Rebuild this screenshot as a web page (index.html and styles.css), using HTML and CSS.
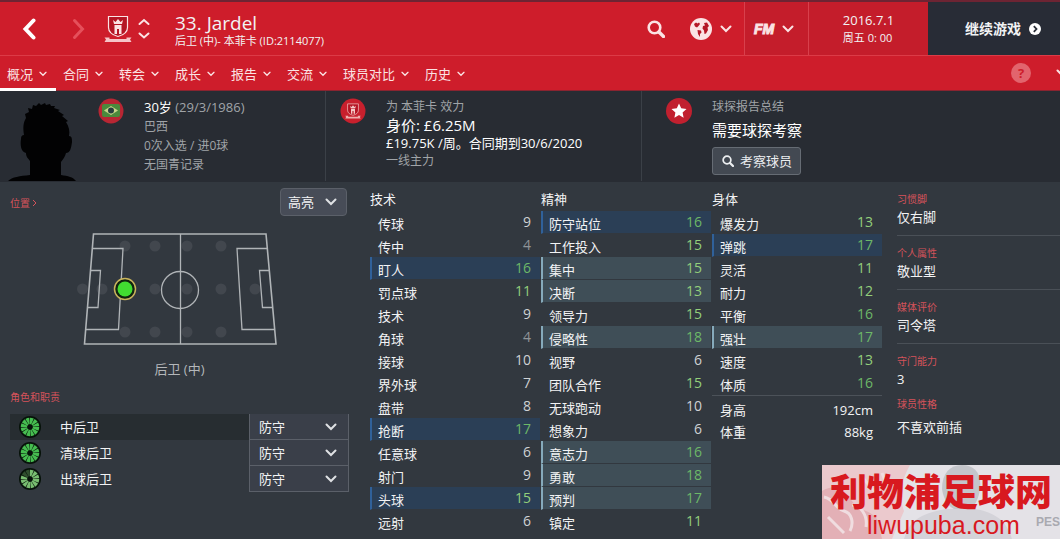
FILE: index.html
```html
<!DOCTYPE html>
<html lang="zh-CN">
<head>
    <meta charset="UTF-8">
    <meta name="viewport" content="width=device-width, initial-scale=1.0">
    <title>33. Jardel</title>
    <link rel="stylesheet" href="styles.css">
</head>
<body>
    <!-- shared icons -->
    <svg class="sprite" aria-hidden="true">
        <symbol id="chevron" viewBox="0 0 12 8"><path d="M1.500 1.500 6 6l4.500-4.500" fill="none" stroke="currentColor" stroke-width="2" stroke-linecap="round"/></symbol>
        <symbol id="search" viewBox="0 0 18 18"><circle cx="7.500" cy="7.500" r="5.800" fill="none" stroke="currentColor" stroke-width="2.600"/><path d="M12 12l4.500 4.500" stroke="currentColor" stroke-width="3.400" stroke-linecap="round"/></symbol>
        <symbol id="crest" viewBox="0 0 28 28">
            <path d="M4.500 1.500h19v11c0 5-4 7.500-9.500 9-5.500-1.500-9.500-4-9.500-9z" fill="#b51524" stroke="currentColor" stroke-width="1.200"/>
            <path d="M9 5l2.500 2L14 4l2.500 3L19 5l-1 4h-8z" fill="currentColor"/>
            <path d="M10.500 10h7v9h-2.500v-5h-2v5h-2.500z" fill="currentColor"/>
            <path d="M.5 22.500h5v1.500h17v-1.500h5l-1.500 2 1.500 2.500H.5L2 24.500z" fill="currentColor" opacity=".85"/>
        </symbol>
        <symbol id="wheel" viewBox="0 0 22 22">
            <circle cx="11" cy="11" r="11" fill="#07120a"/>
            <circle cx="11" cy="11" r="6" fill="none" stroke="currentColor" stroke-width="6.500" pathLength="12" stroke-dasharray=".84 .16"/>
            <circle cx="11" cy="11" r="2.500" fill="#07120a"/>
        </symbol>
    </svg>

    <header class="topbar">
        <button class="icon-btn back" aria-label="后退">
            <svg width="14" height="22" viewBox="0 0 14 22"><path d="M11.500 2.500 3.500 11l8 8.500" fill="none" stroke="currentColor" stroke-width="4" stroke-linecap="round"/></svg>
        </button>
        <button class="icon-btn forward" aria-label="前进">
            <svg width="14" height="22" viewBox="0 0 14 22"><path d="M2.500 2.500l8 8.500-8 8.500" fill="none" stroke="currentColor" stroke-width="3" stroke-linecap="round"/></svg>
        </button>
        <button class="icon-btn club" aria-label="本菲卡"><svg width="28" height="28"><use href="#crest"/></svg></button>
        <button class="icon-btn switcher" aria-label="切换球员">
            <svg width="12" height="22" viewBox="0 0 12 22"><path d="M1.500 6 6 2l4.500 4M1.500 15.500l4.500 4 4.500-4" fill="none" stroke="currentColor" stroke-width="2" stroke-linecap="round"/></svg>
        </button>
        <div class="title">
            <h1>33. Jardel</h1>
            <p>后卫 (中)- 本菲卡 (ID:2114077)</p>
        </div>
        <button class="icon-btn find" aria-label="搜索"><svg width="18" height="18"><use href="#search"/></svg></button>
        <button class="icon-btn world" aria-label="世界">
            <svg width="22" height="22" viewBox="0 0 22 22">
                <circle cx="11" cy="11" r="11" fill="currentColor"/>
                <path d="M4 6l2-1.500 1.500 1L9 4.500l1 1.500-1.500 2L7 9.500 5 8.500z" fill="#b51726"/>
                <path d="M7.500 12l3.500.5.500 2-1.500 1.500v3l-2-3z" fill="#b51726"/>
                <path d="M14 5l3-.5 2 3.500-1.500 1.500L18 12l-2 3.500-1.500.5-.5-3.500-1.500-2 .5-2.500 2-.5z" fill="#b51726"/>
            </svg>
            <svg class="chev" width="12" height="8"><use href="#chevron"/></svg>
        </button>
        <button class="icon-btn fm"><b>FM</b><svg class="chev" width="12" height="8"><use href="#chevron"/></svg></button>
        <div class="date"><div><span class="day">2016.7.1</span><span class="hour">周五 0: 00</span></div></div>
        <button class="continue">继续游戏
            <svg width="12" height="12" viewBox="0 0 12 12"><circle cx="6" cy="6" r="6" fill="#fff"/><path d="M4.800 3.200 7.500 6 4.800 8.800" fill="none" stroke="#282c36" stroke-width="1.800"/></svg>
        </button>
    </header>

    <nav class="tabs">
        <a href="#" class="active">概况<svg><use href="#chevron"/></svg></a>
        <a href="#">合同<svg><use href="#chevron"/></svg></a>
        <a href="#">转会<svg><use href="#chevron"/></svg></a>
        <a href="#">成长<svg><use href="#chevron"/></svg></a>
        <a href="#">报告<svg><use href="#chevron"/></svg></a>
        <a href="#">交流<svg><use href="#chevron"/></svg></a>
        <a href="#">球员对比<svg><use href="#chevron"/></svg></a>
        <a href="#">历史<svg><use href="#chevron"/></svg></a>
        <button class="help">?</button>
        <button class="icon-btn more" aria-label="更多"><svg width="12" height="8"><use href="#chevron"/></svg></button>
    </nav>

    <section class="info">
        <div class="info-card bio">
            <svg class="portrait" width="72" height="80" viewBox="0 0 72 80"><path d="M0 80c4-4 12-5 22-6V60c-2-3-4-4-4-8-5-1-6-8-5-14 0-3 1-4 3-4-1-7-1-12 2-17l-1-4 4-2-1-4 4 1 1-4 3 1 3-3 2 2 4-2 1 2 4-1 1 2 4 0-1 2 6 2-2 1 6 4-2 1 6 5-2 1c3 5 4 9 3 14 3 0 3 3 3 6-1 7-2 11-6 11-1 4-3 6-5 9v13c7 1 12 2 15 6z" fill="#020203"/></svg>
            <svg class="badge" width="26" height="26" viewBox="0 0 26 26">
                <circle cx="13" cy="13" r="12.500" fill="#b82633"/>
                <rect x="4" y="6" width="18" height="13" rx="2" fill="#4a8a3c"/>
                <path d="M6 12.500 13 8l7 4.500-7 4.500z" fill="#c8d68a"/>
                <circle cx="13" cy="12.500" r="3" fill="#27403f"/>
            </svg>
            <div class="lines">
                <p class="strong"><b>30岁</b> (29/3/1986)</p>
                <p>巴西</p>
                <p>0次入选 / 进0球</p>
                <p>无国青记录</p>
            </div>
        </div>
        <div class="info-card contract">
            <svg class="badge" width="26" height="26" viewBox="0 0 26 26">
                <circle cx="13" cy="13" r="12.500" fill="#c8202d"/>
                <svg x="5" y="5" width="16" height="16" color="#f4c9c6"><use href="#crest"/></svg>
            </svg>
            <div class="lines">
                <p>为 本菲卡 效力</p>
                <p class="value">身价: £6.25M</p>
                <p class="wage">£19.75K /周。合同期到30/6/2020</p>
                <p>一线主力</p>
            </div>
        </div>
        <div class="info-card scout">
            <svg class="badge" width="26" height="26" viewBox="0 0 26 26">
                <circle cx="13" cy="13" r="13" fill="#c1202f"/>
                <path d="M13 5.500l2.200 4.800 5.300.6-3.900 3.600 1 5.200-4.600-2.600-4.600 2.600 1-5.200-3.900-3.600 5.300-.6z" fill="#fff"/>
            </svg>
            <div class="lines">
                <p>球探报告总结</p>
                <p class="headline">需要球探考察</p>
                <button class="scout-btn"><svg width="12" height="12"><use href="#search"/></svg>考察球员</button>
            </div>
        </div>
    </section>

    <main class="profile">
        <section class="positions">
            <div class="toolbar">
                <a href="#" class="caption">位置<svg width="5" height="8" viewBox="0 0 5 8"><path d="M1 1l3 3-3 3" fill="none" stroke="currentColor"/></svg></a>
                <select class="highlight" aria-label="高亮"><option>高亮</option></select>
            </div>
            <figure>
                <svg class="pitch" width="206" height="114" viewBox="0 0 206 114">
                    <g fill="#42474e">
                        <circle cx="48" cy="14" r="5.500"/><circle cx="78" cy="14" r="5.500"/><circle cx="110" cy="14" r="5.500"/><circle cx="144" cy="14" r="5.500"/>
                        <circle cx="5.500" cy="57" r="5.500"/><circle cx="25" cy="57" r="5.500"/><circle cx="78" cy="57" r="5.500"/><circle cx="110" cy="57" r="5.500"/><circle cx="144" cy="57" r="5.500"/><circle cx="178" cy="57" r="5.500"/>
                        <circle cx="48" cy="100" r="5.500"/><circle cx="78" cy="100" r="5.500"/><circle cx="110" cy="100" r="5.500"/><circle cx="144" cy="100" r="5.500"/>
                    </g>
                    <g fill="none" stroke="#b0b4b7" stroke-width="1.300">
                        <path d="M16.500 2h172.500l10 110H7.500z" stroke-width="1.600"/>
                        <path d="M103.500 2v110M15.500 16.500h30.500l-4.500 81H9M13.500 38.500h10l-2.500 37H10.500M190.500 16.500h-30.500l5 81h32.500M192.500 38.500h-10l3 37h10"/>
                        <circle cx="103" cy="58" r="18.500"/>
                    </g>
                    <circle cx="48" cy="57" r="10.500" fill="#10240f" stroke="#c9b45c" stroke-width="1.500"/>
                    <circle cx="48" cy="57" r="7.500" fill="#41dd31"/>
                </svg>
                <figcaption>后卫 (中)</figcaption>
            </figure>
            <h2 class="caption">角色和职责</h2>
            <ul class="roles">
                <li class="selected">
                    <svg class="wheel"><use href="#wheel"/></svg>
                    <label for="role1">中后卫</label>
                    <select id="role1"><option>防守</option></select>
                </li>
                <li>
                    <svg class="wheel"><use href="#wheel"/></svg>
                    <label for="role2">清球后卫</label>
                    <select id="role2"><option>防守</option></select>
                </li>
                <li>
                    <svg class="wheel light" viewBox="0 0 22 22"><use href="#wheel"/><path d="M11 11 2 7.500A10 10 0 0 1 10.500 1z" fill="#07120a" opacity=".65"/></svg>
                    <label for="role3">出球后卫</label>
                    <select id="role3"><option>防守</option></select>
                </li>
            </ul>
        </section>

        <section class="attributes">
            <h2>技术</h2>
            <table>
                <tr><th>传球</th><td>9</td></tr>
                <tr><th>传中</th><td class="low">4</td></tr>
                <tr class="key"><th>盯人</th><td class="great">16</td></tr>
                <tr><th>罚点球</th><td class="good">11</td></tr>
                <tr><th>技术</th><td>9</td></tr>
                <tr><th>角球</th><td class="low">4</td></tr>
                <tr><th>接球</th><td>10</td></tr>
                <tr><th>界外球</th><td>7</td></tr>
                <tr><th>盘带</th><td>8</td></tr>
                <tr class="key"><th>抢断</th><td class="great">17</td></tr>
                <tr><th>任意球</th><td>6</td></tr>
                <tr><th>射门</th><td>9</td></tr>
                <tr class="key"><th>头球</th><td class="good">15</td></tr>
                <tr><th>远射</th><td>6</td></tr>
            </table>
        </section>

        <section class="attributes">
            <h2>精神</h2>
            <table>
                <tr class="key"><th>防守站位</th><td class="great">16</td></tr>
                <tr><th>工作投入</th><td class="good">15</td></tr>
                <tr class="useful"><th>集中</th><td class="good">15</td></tr>
                <tr class="useful"><th>决断</th><td class="good">13</td></tr>
                <tr><th>领导力</th><td class="good">15</td></tr>
                <tr class="useful"><th>侵略性</th><td class="great">18</td></tr>
                <tr><th>视野</th><td>6</td></tr>
                <tr><th>团队合作</th><td class="good">15</td></tr>
                <tr><th>无球跑动</th><td>10</td></tr>
                <tr><th>想象力</th><td>6</td></tr>
                <tr class="useful"><th>意志力</th><td class="great">16</td></tr>
                <tr class="useful"><th>勇敢</th><td class="great">18</td></tr>
                <tr class="useful"><th>预判</th><td class="great">17</td></tr>
                <tr><th>镇定</th><td class="good">11</td></tr>
            </table>
        </section>

        <section class="attributes">
            <h2>身体</h2>
            <table>
                <tr><th>爆发力</th><td class="good">13</td></tr>
                <tr class="key"><th>弹跳</th><td class="great">17</td></tr>
                <tr><th>灵活</th><td class="good">11</td></tr>
                <tr><th>耐力</th><td class="good">12</td></tr>
                <tr><th>平衡</th><td class="great">16</td></tr>
                <tr class="useful"><th>强壮</th><td class="great">17</td></tr>
                <tr><th>速度</th><td class="good">13</td></tr>
                <tr><th>体质</th><td class="great">16</td></tr>
            </table>
            <table class="body-size">
                <tr><th>身高</th><td>192cm</td></tr>
                <tr><th>体重</th><td>88kg</td></tr>
            </table>
        </section>

        <dl class="traits">
            <div><dt>习惯脚</dt><dd>仅右脚</dd></div>
            <div><dt>个人属性</dt><dd>敬业型</dd></div>
            <div><dt>媒体评价</dt><dd>司令塔</dd></div>
            <div><dt>守门能力</dt><dd>3</dd></div>
            <div class="moves"><dt>球员性格</dt><dd>不喜欢前插</dd></div>
        </dl>
    </main>

    <aside class="watermark">
        <svg class="art" viewBox="0 0 238 74" preserveAspectRatio="none" aria-hidden="true">
            <path d="M0 0h88c-8 14-12 30-6 46l-12 28H0z" fill="#ebc9cd"/>
            <path d="M0 26c14-8 22-2 30 10s20 8 26 20l4 18H0z" fill="#e3b0b6"/>
            <path d="M2 32c10 2 12 12 20 14s10 12 6 20M30 40c8 0 16 10 14 22M6 52l16 16M40 12l14 16M60 8l8 20" fill="none" stroke="#f0dde0" stroke-width="3"/>
            <path d="M120 24c0-16 8-24 20-24s20 8 18 24c-2 14-8 22-18 22s-18-8-20-22z" fill="#c4c5ca"/>
            <path d="M82 74c6-22 22-26 42-30h30c18 4 30 10 36 30z" fill="#d4d3d9"/>
        </svg>
        <strong>利物浦足球网</strong>
        <span>liwupuba.com</span>
        <em>PES</em>
    </aside>
</body>
</html>
```

FILE: styles.css
```css
* { box-sizing: border-box; }
body { position: relative; margin: 0; min-height: 100vh; overflow-x: hidden; font-family: "Open Sans", "Noto Sans CJK SC", sans-serif; font-size: 13px; line-height: 18px; color: #f2f3f4; background-color: #32383f; }
h1, h2, p, ul, dl, dd, figure { margin: 0; padding: 0; font-weight: normal; }
a { color: inherit; text-decoration: none; }
button, select { font: inherit; color: inherit; cursor: pointer; }
svg { display: block; flex: none; }
.sprite { position: absolute; width: 0; height: 0; }
.caption, dt { font-size: 10px; line-height: 14px; color: #d5535b; }

/* top bar */
.topbar { display: flex; height: 56px; border-top: 2px solid #6d2433; border-bottom: 1px solid #dc3b47; background-color: #ce1d2b; }
.icon-btn { display: flex; align-items: center; padding: 0; border: none; background: none; color: #fbe3e4; }
.back { padding-left: 22px; color: #fff; }
.forward { padding-left: 36px; color: #e5505b; }
.club { padding-left: 18px; }
.switcher { padding-left: 6px; }
.title { flex: 1; padding: 10px 0 0 25px; }
.title h1 { font-size: 19px; line-height: 22px; }
.title p { font-size: 11px; line-height: 14px; }
.world { gap: 8px; padding: 0 12px 0 25px; }
.fm { gap: 8px; width: 64px; padding-left: 9px; border-left: 1px solid #d8404c; background-color: #c41d2b; }
.fm b { font-family: "Liberation Sans", sans-serif; font-size: 14px; font-weight: bold; font-style: italic; -webkit-text-stroke: 1px currentColor; }
.date { display: flex; justify-content: center; width: 120px; padding-top: 9px; border-left: 1px solid #d8404c; background-color: #c41d2b; }
.date span { display: block; }
.day { font-size: 13px; }
.hour { font-size: 11px; }
.continue { display: flex; align-items: center; justify-content: flex-end; gap: 8px; width: 132px; padding: 0 19px 0 0; border: none; font-size: 14px; font-weight: bold; background-color: #282c36; }

/* tabs */
.tabs { display: flex; align-items: center; height: 35px; background-color: #ce1d2b; color: #fbe3e4; border-bottom: 1px solid #8a2430; }
.tabs a { display: flex; align-items: center; gap: 6px; height: 35px; padding: 2px 9px 0 7px; border-bottom: 3px solid transparent; border-top: 3px solid transparent; }
.tabs a.active { border-bottom-color: #fff; }
.tabs a svg { width: 8px; height: 6px; }
.help { width: 20px; height: 20px; margin-left: auto; padding: 0; border: none; border-radius: 50%; background-color: #e2646d; color: #ce1d2b; font-weight: bold; }
.more { margin-right: -8px; padding-left: 25px; }

/* player info */
.info { display: grid; grid-template-columns: 326fr 316fr 418fr; height: 91px; padding-bottom: 1px; background-color: #282c33; }
.info-card { display: flex; padding-top: 7px; border-right: 1px solid #3b4047; }
.info-card:last-child { border-right: none; }
.lines { padding-left: 20px; font-size: 12px; color: #a0a4a8; }
.bio { padding-left: 8px; }
.bio .badge { margin-left: 18px; }
.bio p { line-height: 19px; }
.bio .strong { font-size: 13px; }
.bio b { font-weight: normal; color: #fff; }
.portrait { align-self: flex-end; }
.contract { padding-left: 14px; }
.value { font-size: 15px; color: #fff; }
.wage { font-size: 13px; color: #fff; }
.scout { padding-left: 24px; }
.headline { padding: 5px 0; font-size: 15px; color: #fff; }
.scout-btn { display: flex; align-items: center; gap: 6px; height: 28px; margin-top: 3px; padding: 0 8px 0 9px; border: 1px solid #666c74; border-radius: 3px; font-size: 13px; color: #eceef0; background-color: #434952; }

/* profile body */
.profile { display: grid; grid-template-columns: 370fr 171fr 171fr 171fr 177fr; }
.positions { padding: 6px 21px 0 10px; }
.toolbar { display: flex; justify-content: space-between; padding-right: 2px; }
.toolbar .caption { display: flex; align-items: center; gap: 2px; height: 30px; }
select { appearance: none; height: 26px; padding: 0 10px; border: 1px solid #5b6069; border-radius: 0; background: #3a3f49 url("data:image/svg+xml,%3Csvg xmlns='http://www.w3.org/2000/svg' width='12' height='8'%3E%3Cpath d='M1.500 1.500 6 6l4.500-4.500' fill='none' stroke='%23dfe1e4' stroke-width='2' stroke-linecap='round'/%3E%3C/svg%3E") no-repeat right 11px center; }
.highlight { width: 67px; height: 28px; padding: 0 7px; border-radius: 4px; background-color: #474c57; background-position: right 9px center; }
figure { padding: 14px 0 12px; text-align: center; }
.pitch { margin: 0 auto; }
figcaption { margin-top: 14px; color: #b4b7ba; }
.roles { margin-top: 10px; list-style: none; }
.roles li { display: flex; align-items: center; height: 26px; padding-left: 9px; }
.roles .selected { background-color: #272d31; }
.roles label { flex: 1; padding-left: 19px; }
.roles select { width: 100px; padding: 0 9px; border-top: none; }
.wheel { width: 22px; height: 22px; color: #46bd50; }
.wheel.light { color: #78bd70; }

.attributes { padding: 6px 1px 0 0; }
.attributes h2 { font-size: 13px; line-height: 22px; }
.attributes table { width: 100%; margin-top: 1px; border-spacing: 0; }
th, td { height: 23px; padding: 0; line-height: 18px; border-bottom: 1px solid #32383f; }
th { padding: 4px 0 0 6px; border-left: 2px solid transparent; font-weight: normal; text-align: left; }
td { padding-right: 9px; font-size: 14px; text-align: right; color: #cfd2d4; vertical-align: top; line-height: 22px; }
.low { color: #8f9498; }
.good { color: #93cf7b; }
.great { color: #6db868; }
tr.key { background-color: #2b3f56; }
tr.key th { border-left-color: #30619a; }
tr.useful { background-color: #3f4e57; }
tr.useful th { border-left-color: #86aabb; }
.attributes .body-size { margin-top: 0; border-top: 1px solid #4c5259; padding-top: 3px; }
.body-size th, .body-size td { height: 22px; padding-top: 0; border-bottom: none; color: #f2f3f4; }
.body-size td { font-size: 13px; }

.traits { padding-left: 14px; }
.traits div { padding: 10px 0 7px; border-bottom: 1px solid #4a5057; }
.traits dd { line-height: 22px; }
.traits div:nth-child(4) { padding-bottom: 0; border-bottom: none; }
.traits .moves { padding-top: 7px; border-bottom: none; }
.moves dd { padding-top: 5px; }

/* site watermark laid over the corner */
.watermark { position: absolute; right: 0; bottom: 0; width: 238px; height: 74px; padding-left: 8px; background-color: #e4e2e7; color: #d8191f; }
.watermark .art { position: absolute; top: 0; left: 0; width: 100%; height: 100%; }
.watermark strong { position: relative; display: block; font-family: "Noto Sans CJK SC", sans-serif; font-size: 37px; font-weight: 900; line-height: 50px; white-space: nowrap; }
.watermark span { position: relative; display: block; padding-left: 37px; font-family: "Liberation Sans", sans-serif; font-size: 25px; line-height: 20px; }
.watermark em { position: absolute; right: 0; bottom: 10px; font-family: "Liberation Sans", sans-serif; font-size: 12px; font-weight: bold; font-style: normal; line-height: 14px; color: #a9a9b0; }
```
